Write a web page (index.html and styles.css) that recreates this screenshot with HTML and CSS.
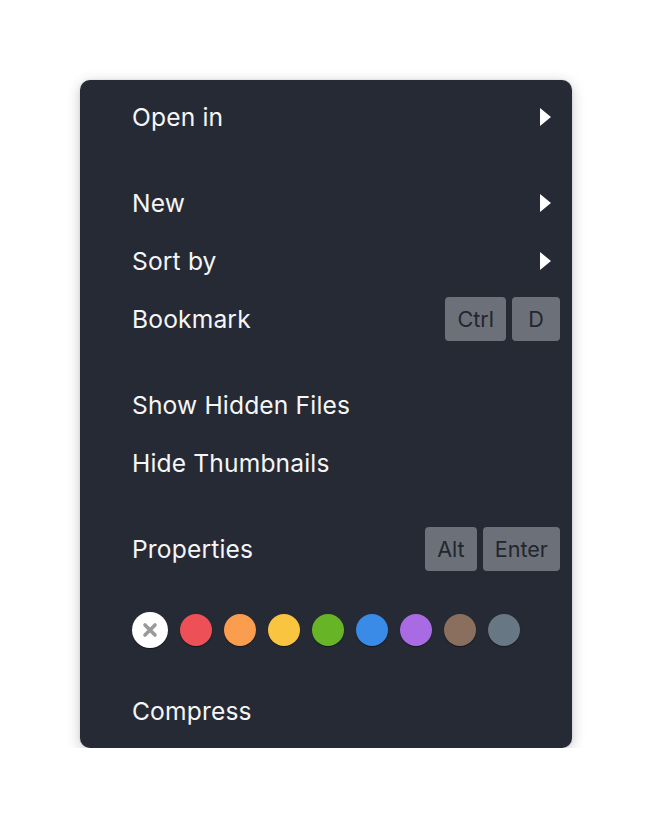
FILE: index.html
```html
<!DOCTYPE html>
<html>
<head>
<meta charset="utf-8">
<link rel="stylesheet" href="styles.css">
</head>
<body>
<div class="menu">
  <div class="item"><span class="label">Open in</span><span class="arrow"></span></div>
  <div class="sep"></div>
  <div class="item"><span class="label">New</span><span class="arrow"></span></div>
  <div class="item"><span class="label">Sort by</span><span class="arrow"></span></div>
  <div class="item"><span class="label">Bookmark</span><span class="keys"><span class="key">Ctrl</span><span class="key">D</span></span></div>
  <div class="sep"></div>
  <div class="item"><span class="label">Show Hidden Files</span></div>
  <div class="item"><span class="label">Hide Thumbnails</span></div>
  <div class="sep"></div>
  <div class="item"><span class="label">Properties</span><span class="keys"><span class="key">Alt</span><span class="key">Enter</span></span></div>
  <div class="sep"></div>
  <div class="colors">
    <span class="dot none"><svg width="16" height="16" viewBox="0 0 16 16"><path d="M3 3 L13 13 M13 3 L3 13" stroke="#9a9a9a" stroke-width="3.6" stroke-linecap="round"/></svg></span>
    <span class="dot red"></span>
    <span class="dot orange"></span>
    <span class="dot yellow"></span>
    <span class="dot green"></span>
    <span class="dot blue"></span>
    <span class="dot purple"></span>
    <span class="dot brown"></span>
    <span class="dot slate"></span>
  </div>
  <div class="sep"></div>
  <div class="item"><span class="label">Compress</span></div>
</div>
</body>
</html>
```
FILE: styles.css
```css
html, body {
  margin: 0;
  padding: 0;
  background: #ffffff;
}
body {
  padding: 80px 82px 0 80px;
  font-family: "Inter", "Noto Sans", sans-serif;
}
.menu {
  width: 492px;
  box-sizing: border-box;
  background: #262a35;
  border-radius: 10px;
  padding: 8px 12px 8px 52px;
  box-shadow: 0 3px 14px rgba(0, 0, 0, 0.22), 0 0 2px rgba(0, 0, 0, 0.15);
  display: flex;
  flex-direction: column;
}
.item {
  height: 58px;
  display: flex;
  align-items: center;
  justify-content: space-between;
}
.label {
  color: #f5f6f7;
  font-size: 24.6px;
  letter-spacing: 0.15px;
}
.arrow {
  width: 0;
  height: 0;
  border-top: 9px solid transparent;
  border-bottom: 9px solid transparent;
  border-left: 11px solid #ffffff;
  margin-right: 9px;
}
.sep {
  height: 28px;
}
.keys {
  display: flex;
  gap: 6px;
}
.key {
  height: 44px;
  min-width: 48px;
  box-sizing: border-box;
  padding: 0 12px;
  background: #6c7078;
  color: #22262e;
  border-radius: 4px;
  font-size: 21.6px;
  display: flex;
  align-items: center;
  justify-content: center;
}
.colors {
  height: 48px;
  display: flex;
  align-items: center;
  gap: 12px;
}
.dot {
  width: 32px;
  height: 32px;
  border-radius: 50%;
  box-shadow: 0 1px 1px rgba(0, 0, 0, 0.45);
}
.none {
  width: 36px;
  height: 36px;
  background: #ffffff;
  display: flex;
  align-items: center;
  justify-content: center;
}
.red { background: #ed5157; }
.orange { background: #fb9d4f; }
.yellow { background: #f9c440; }
.green { background: #67b426; }
.blue { background: #3a8ae8; }
.purple { background: #a96be3; }
.brown { background: #8a6f5e; }
.slate { background: #677784; }
```
